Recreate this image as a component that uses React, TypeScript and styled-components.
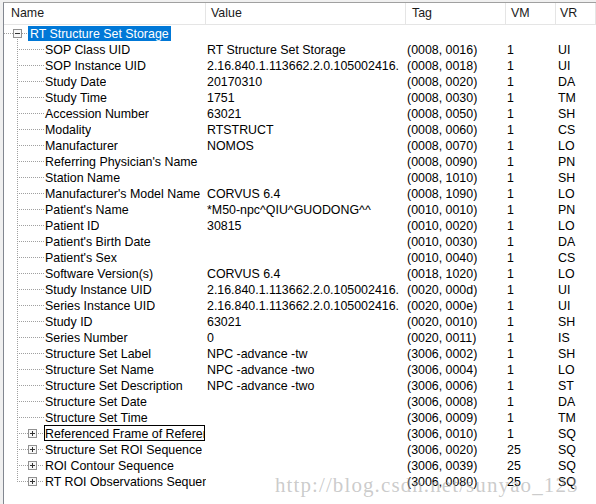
import { createGlobalStyle, styled } from "styled-components";

type Item = {
  name: string;
  value: string;
  tag: string;
  vm: string;
  vr: string;
  seq?: boolean;
  focused?: boolean;
};

// the list view clips these columns; keep the part that is visible
const UID = "2.16.840.1.113662.2.0.105002416.";

const items: Item[] = [
  { name: "SOP Class UID", value: "RT Structure Set Storage", tag: "(0008, 0016)", vm: "1", vr: "UI" },
  { name: "SOP Instance UID", value: UID, tag: "(0008, 0018)", vm: "1", vr: "UI" },
  { name: "Study Date", value: "20170310", tag: "(0008, 0020)", vm: "1", vr: "DA" },
  { name: "Study Time", value: "1751", tag: "(0008, 0030)", vm: "1", vr: "TM" },
  { name: "Accession Number", value: "63021", tag: "(0008, 0050)", vm: "1", vr: "SH" },
  { name: "Modality", value: "RTSTRUCT", tag: "(0008, 0060)", vm: "1", vr: "CS" },
  { name: "Manufacturer", value: "NOMOS", tag: "(0008, 0070)", vm: "1", vr: "LO" },
  { name: "Referring Physician's Name", value: "", tag: "(0008, 0090)", vm: "1", vr: "PN" },
  { name: "Station Name", value: "", tag: "(0008, 1010)", vm: "1", vr: "SH" },
  { name: "Manufacturer's Model Name", value: "CORVUS 6.4", tag: "(0008, 1090)", vm: "1", vr: "LO" },
  { name: "Patient's Name", value: "*M50-npc^QIU^GUODONG^^", tag: "(0010, 0010)", vm: "1", vr: "PN" },
  { name: "Patient ID", value: "30815", tag: "(0010, 0020)", vm: "1", vr: "LO" },
  { name: "Patient's Birth Date", value: "", tag: "(0010, 0030)", vm: "1", vr: "DA" },
  { name: "Patient's Sex", value: "", tag: "(0010, 0040)", vm: "1", vr: "CS" },
  { name: "Software Version(s)", value: "CORVUS 6.4", tag: "(0018, 1020)", vm: "1", vr: "LO" },
  { name: "Study Instance UID", value: UID, tag: "(0020, 000d)", vm: "1", vr: "UI" },
  { name: "Series Instance UID", value: UID, tag: "(0020, 000e)", vm: "1", vr: "UI" },
  { name: "Study ID", value: "63021", tag: "(0020, 0010)", vm: "1", vr: "SH" },
  { name: "Series Number", value: "0", tag: "(0020, 0011)", vm: "1", vr: "IS" },
  { name: "Structure Set Label", value: "NPC -advance -tw", tag: "(3006, 0002)", vm: "1", vr: "SH" },
  { name: "Structure Set Name", value: "NPC -advance -two", tag: "(3006, 0004)", vm: "1", vr: "LO" },
  { name: "Structure Set Description", value: "NPC -advance -two", tag: "(3006, 0006)", vm: "1", vr: "ST" },
  { name: "Structure Set Date", value: "", tag: "(3006, 0008)", vm: "1", vr: "DA" },
  { name: "Structure Set Time", value: "", tag: "(3006, 0009)", vm: "1", vr: "TM" },
  { name: "Referenced Frame of Referen", value: "", tag: "(3006, 0010)", vm: "1", vr: "SQ", seq: true, focused: true },
  { name: "Structure Set ROI Sequence", value: "", tag: "(3006, 0020)", vm: "25", vr: "SQ", seq: true },
  { name: "ROI Contour Sequence", value: "", tag: "(3006, 0039)", vm: "25", vr: "SQ", seq: true },
  { name: "RT ROI Observations Sequen", value: "", tag: "(3006, 0080)", vm: "25", vr: "SQ", seq: true },
];

const DOT = "#a0a0a0";

function Box({ x, plus }: { x: number; plus?: boolean }) {
  return (
    <>
      <rect x={x + 0.5} y={4.5} width={8} height={8} fill="#f7f7f7" stroke="#919191" />
      <line x1={x + 2} x2={x + 7} y1={8.5} y2={8.5} stroke="#333" />
      {plus && <line x1={x + 4.5} x2={x + 4.5} y1={6} y2={11} stroke="#333" />}
    </>
  );
}

function RootLines() {
  return (
    <Lines width={24} height={16}>
      <line x1={0} x2={9} y1={8.5} y2={8.5} stroke={DOT} strokeDasharray="1 1" />
      <Box x={9} />
      <line x1={13.5} x2={13.5} y1={14} y2={16} stroke={DOT} strokeDasharray="1 1" />
      <line x1={18} x2={24} y1={8.5} y2={8.5} stroke={DOT} strokeDasharray="1 1" />
    </Lines>
  );
}

function ChildLines({ last, seq }: { last: boolean; seq?: boolean }) {
  return (
    <Lines width={40} height={16}>
      <line x1={13.5} x2={13.5} y1={0} y2={last ? 9 : 16} stroke={DOT} strokeDasharray="1 1" />
      {seq ? (
        <>
          <line x1={15} x2={24} y1={8.5} y2={8.5} stroke={DOT} strokeDasharray="1 1" />
          <Box x={24} plus />
          <line x1={34} x2={40} y1={8.5} y2={8.5} stroke={DOT} strokeDasharray="1 1" />
        </>
      ) : (
        <line x1={15} x2={40} y1={8.5} y2={8.5} stroke={DOT} strokeDasharray="1 1" />
      )}
    </Lines>
  );
}

export default function App() {
  return (
    <>
      <GlobalStyle />
      <Frame>
        <Header>
          <HeadCell $pad={7}>Name</HeadCell>
          <HeadCell>Value</HeadCell>
          <HeadCell $pad={6}>Tag</HeadCell>
          <HeadCell>VM</HeadCell>
          <HeadCell $pad={4}>VR</HeadCell>
        </Header>
        <Row>
          <NameCell>
            <RootLines />
            <Label $state="selected">RT Structure Set Storage</Label>
          </NameCell>
        </Row>
        {items.map((it, i) => (
          <Row key={it.tag}>
            <NameCell>
              <ChildLines last={i === items.length - 1} seq={it.seq} />
              <Label $state={it.focused ? "focused" : "normal"}>{it.name}</Label>
            </NameCell>
            <Cell>{it.value}</Cell>
            <Cell>{it.tag}</Cell>
            <Cell>{it.vm}</Cell>
            <Cell $pad={2}>{it.vr}</Cell>
          </Row>
        ))}
        <Watermark>http://blog.csdn.net/sunyao_123</Watermark>
      </Frame>
    </>
  );
}

const GlobalStyle = createGlobalStyle`
  html, body {
    margin: 0;
    background: #f0f0f0;
  }
  body {
    font-family: "Liberation Sans", Arial, sans-serif;
    font-size: 12.4px;
    color: #000;
  }
`;

const COLS = "202px 200px 100px 50px 1fr";

const Frame = styled.div`
  position: relative;
  margin: 2px 0 0 3px;
  border-top: 1px solid #a0a0a0;
  border-left: 1px solid #828790;
  background: #fff;
  height: 502px;
  overflow: hidden;
`;

const Header = styled.div`
  display: grid;
  grid-template-columns: ${COLS};
  height: 21px;
  border-bottom: 1px solid #e5e5e5;
`;

const HeadCell = styled.div<{ $pad?: number }>`
  padding-left: ${(p) => p.$pad ?? 5}px;
  line-height: 21px;
  border-right: 1px solid #e5e5e5;
  white-space: nowrap;
  overflow: hidden;
  color: #1a1a1a;
`;

const Row = styled.div`
  display: grid;
  grid-template-columns: ${COLS};
  height: 16px;
  line-height: 14px;
`;

const NameCell = styled.div`
  display: flex;
  align-items: flex-start;
  overflow: hidden;
  white-space: nowrap;
  min-width: 0;
`;

const Lines = styled.svg`
  flex: none;
  display: block;
  shape-rendering: crispEdges;
`;

const Label = styled.div<{ $state: "normal" | "selected" | "focused" }>`
  white-space: nowrap;
  overflow: hidden;
  ${(p) =>
    p.$state === "selected"
      ? `
    background: #0078d7;
    color: #fff;
    padding: 1px 2px 0;
    margin-top: 1px;
    height: 14px;
    line-height: 14px;
  `
      : p.$state === "focused"
      ? `
    flex: 1;
    border: 1px solid #000;
    height: 14px;
    padding-top: 1px;
    box-sizing: border-box;
    height: 16px;
    line-height: 14px;
    margin-right: 1px;
  `
      : `
    padding: 2px 0 0 1px;
  `}
`;

const Cell = styled.div<{ $pad?: number }>`
  padding: 2px 0 0 ${(p) => p.$pad ?? 1}px;
  white-space: nowrap;
  overflow: hidden;
  min-width: 0;
`;

const Watermark = styled.div`
  position: absolute;
  left: 271px;
  top: 470px;
  font-family: "Liberation Serif", "Times New Roman", serif;
  font-size: 21px;
  letter-spacing: 1.1px;
  color: rgba(160, 160, 160, 0.55);
  white-space: nowrap;
  pointer-events: none;
`;
